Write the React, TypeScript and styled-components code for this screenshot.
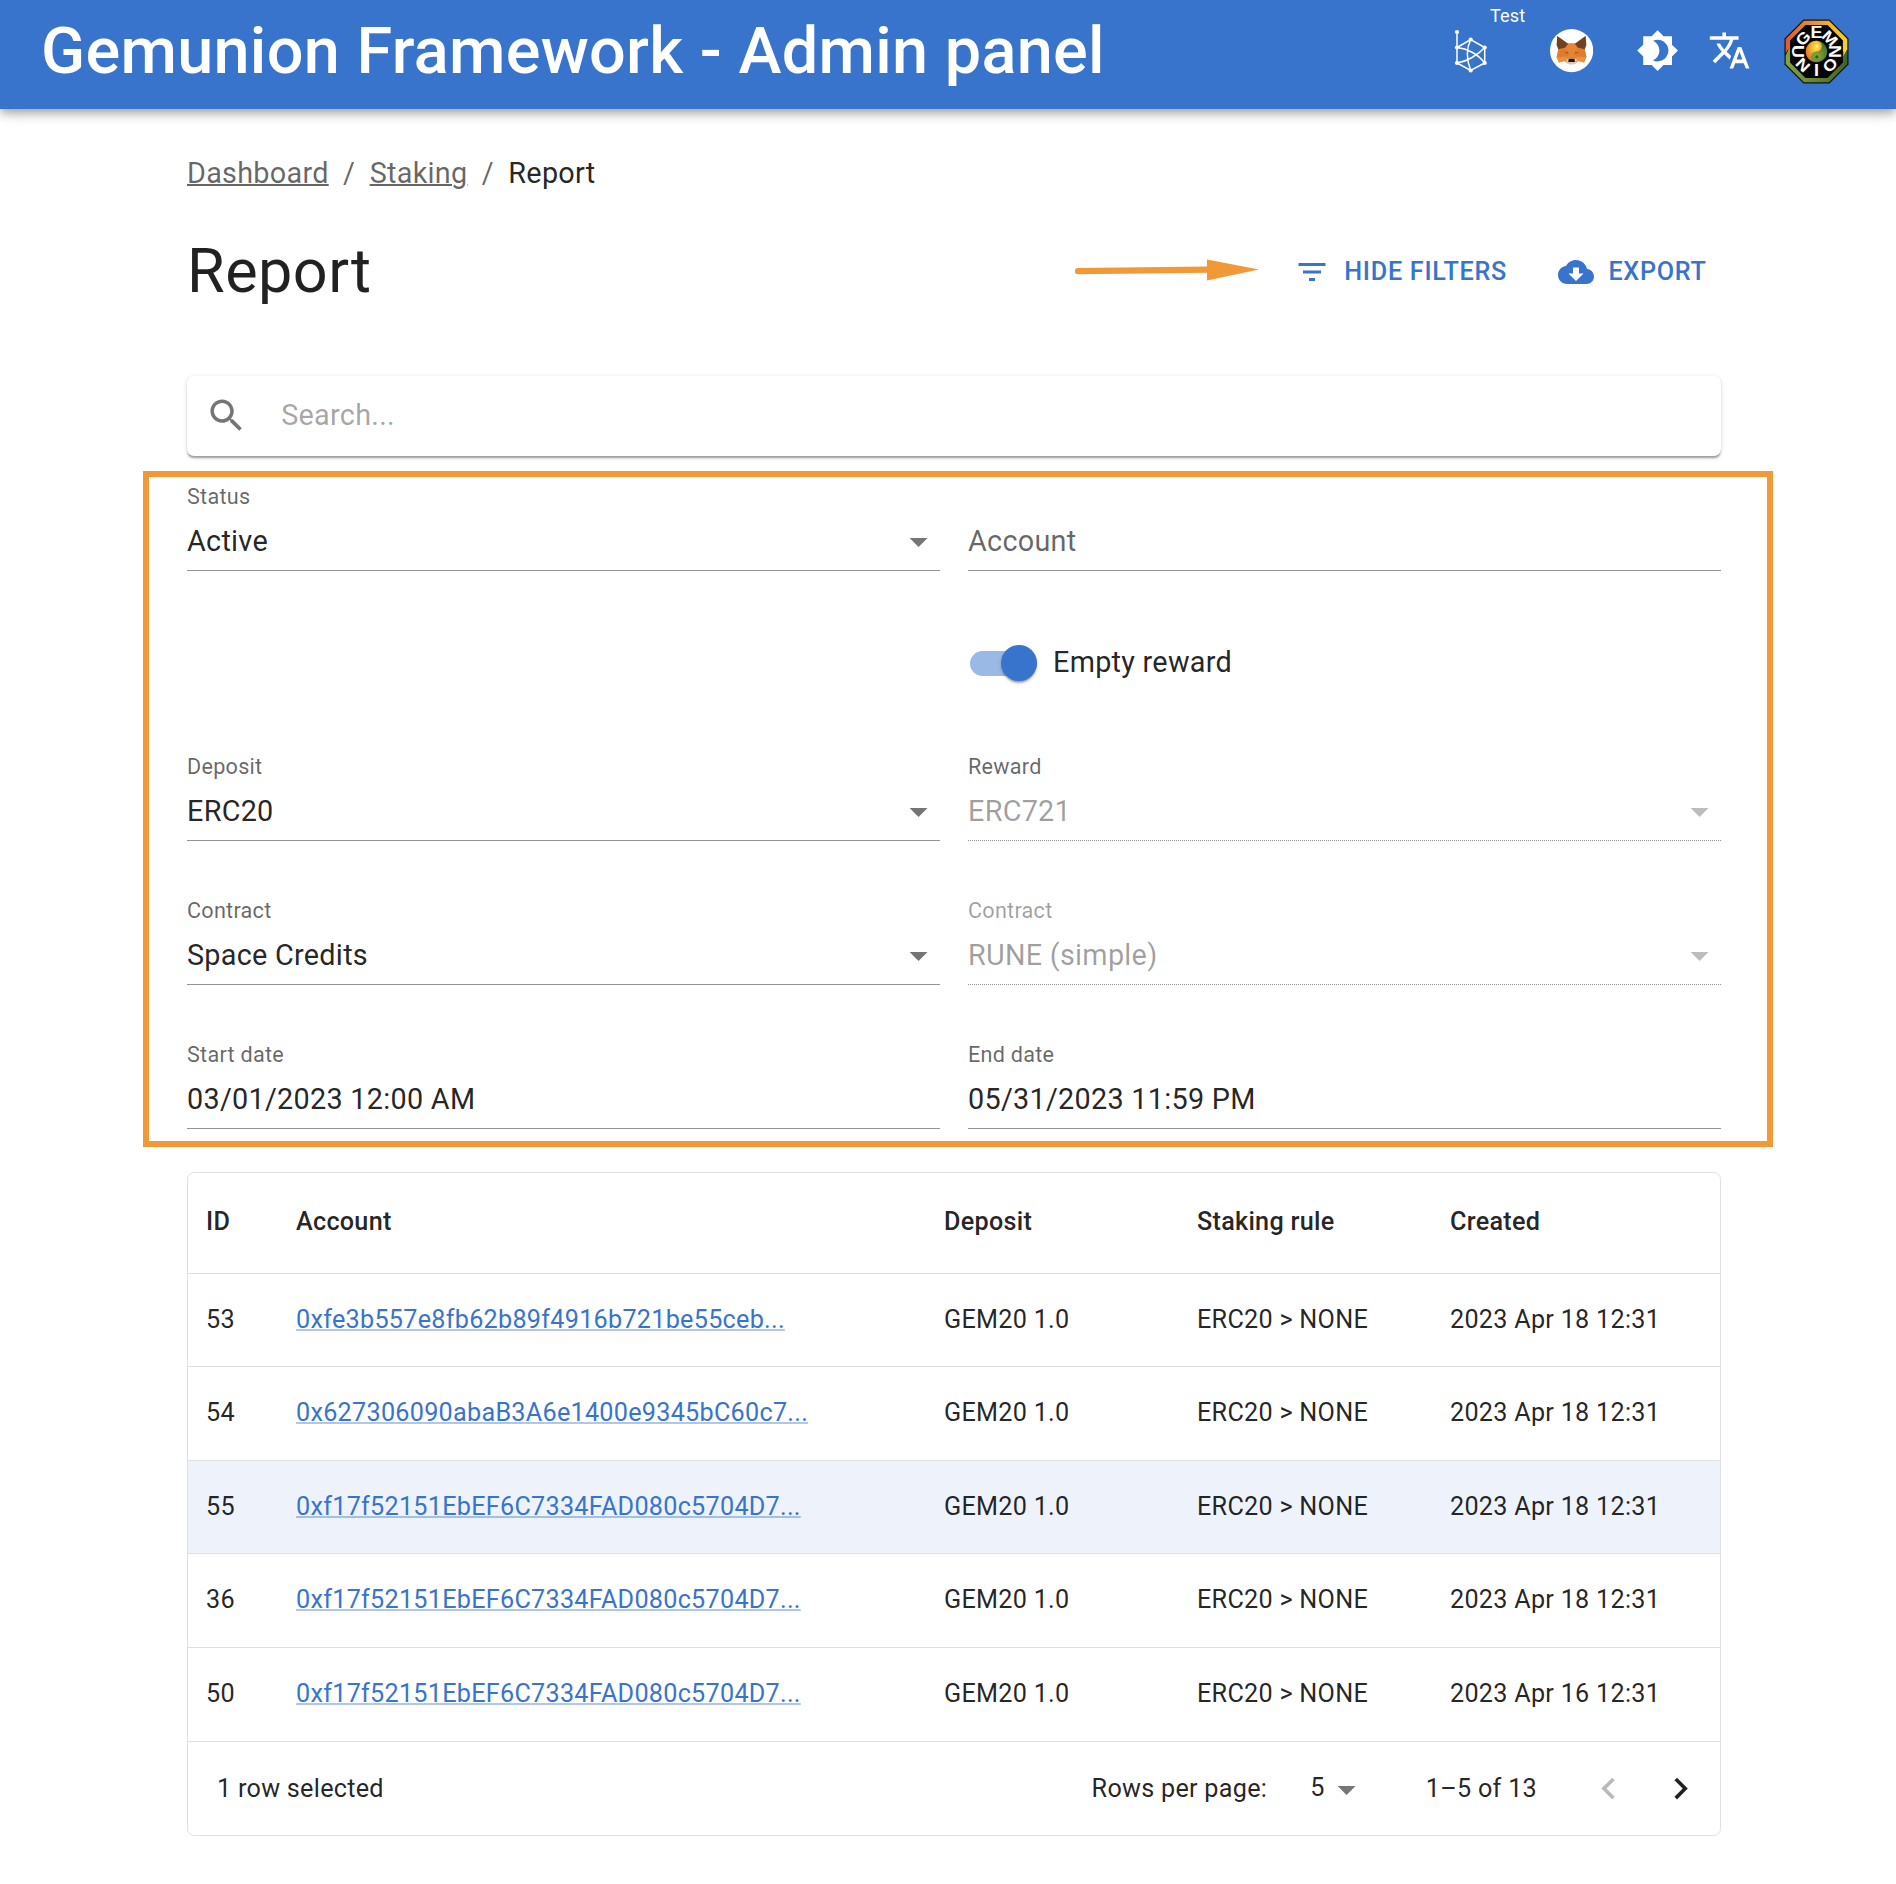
import React from "react";
import styled, { createGlobalStyle, css } from "styled-components";

const blue = "#3874cb";
const orange = "#f19937";
const ink = "rgba(0, 0, 0, 0.87)";

const GlobalStyle = createGlobalStyle`
  * { box-sizing: border-box; }
  body {
    margin: 0;
    background: #fff;
    color: ${ink};
    font-family: Roboto, "Liberation Sans", sans-serif;
    font-size: 28.8px;
    line-height: 1.5;
    letter-spacing: 0.00938em;
    -webkit-font-smoothing: antialiased;
  }
`;

const AppBar = styled.header`
  height: 109px;
  padding: 0 29px 7px 41px;
  display: flex;
  align-items: center;
  background: ${blue};
  color: #fff;
  box-shadow: 0 3.6px 7.2px -1.8px rgba(0, 0, 0, 0.2), 0 7.2px 9px rgba(0, 0, 0, 0.14),
    0 1.8px 18px rgba(0, 0, 0, 0.12);
`;

const Brand = styled.div`
  flex: 1;
  font-size: 64.8px;
  font-weight: 500;
  line-height: 72px;
  letter-spacing: 0.0045em;
  white-space: nowrap;
`;

const Toolbar = styled.div`
  display: flex;
  align-items: center;
`;

const ToolButton = styled.button<{ $width: number }>`
  position: relative;
  display: flex;
  align-items: center;
  justify-content: center;
  width: ${(p) => p.$width}px;
  height: 72px;
  padding: 0;
  border: 0;
  background: none;
  color: inherit;
  font: inherit;
`;

const Badge = styled.span`
  position: absolute;
  left: 69px;
  top: -8px;
  font-size: 18px;
  line-height: 18px;
  letter-spacing: 0.01em;
`;

const Content = styled.main`
  width: 1534px;
  margin: 0 auto 0 187px;
`;

const Breadcrumbs = styled.nav`
  display: flex;
  gap: 14.4px;
  padding-top: 42.6px;
  color: rgba(0, 0, 0, 0.6);
`;

const Crumb = styled.a`
  text-decoration: underline;
  text-decoration-thickness: 2px;
`;

const CurrentCrumb = styled.span`
  color: ${ink};
`;

const PageHeader = styled.div`
  display: flex;
  align-items: center;
  height: 76px;
  margin-top: 39px;
`;

const Heading = styled.h1`
  flex: 1;
  margin: 0;
  font-size: 61.2px;
  font-weight: 400;
  line-height: 1.235;
  letter-spacing: 0.00735em;
`;

const PointerArrow = styled.svg`
  width: 186px;
  height: 24px;
  margin: 0 34px 3px 0;
`;

const ActionButton = styled.button`
  display: flex;
  align-items: center;
  gap: 14.4px;
  padding: 0 14.4px 0 0;
  border: 0;
  background: none;
  color: ${blue};
  font-family: inherit;
  font-size: 25.2px;
  font-weight: 500;
  line-height: 44px;
  letter-spacing: 0.02857em;
  text-transform: uppercase;

  & + & {
    margin-left: 36.5px;
  }
`;

const SearchBox = styled.div`
  display: flex;
  align-items: center;
  height: 80px;
  margin-top: 66px;
  padding-left: 18px;
  gap: 33px;
  border-radius: 7.2px;
  background: #fff;
  color: rgba(0, 0, 0, 0.54);
  box-shadow: 0 3.6px 1.8px -1.8px rgba(0, 0, 0, 0.2), 0 1.8px 1.8px rgba(0, 0, 0, 0.14),
    0 1.8px 5.4px rgba(0, 0, 0, 0.12);
`;

const Placeholder = styled.span`
  color: rgba(0, 0, 0, 0.37);
`;

const FilterPanel = styled.section`
  display: grid;
  grid-template-columns: 1fr 1fr;
  grid-template-rows: 94px 126px repeat(3, 144px);
  column-gap: 28px;
  width: 1630px;
  height: 676px;
  margin: 15px 0 0 -44px;
  padding: 0 46px 0 38px;
  border: 6px solid ${orange};
`;

const Field = styled.div<{ $disabled?: boolean }>`
  display: flex;
  flex-direction: column;
  justify-content: flex-end;
  border-bottom: 1px solid #949494;
  ${(p) =>
    p.$disabled &&
    css`
      border-bottom-style: dotted;
    `}
`;

const FieldLabel = styled.label<{ $faded?: boolean }>`
  color: ${(p) => (p.$faded ? "rgba(0, 0, 0, 0.38)" : "rgba(0, 0, 0, 0.6)")};
  font-size: 21.6px;
  line-height: 31px;
`;

const FieldValue = styled.div<{ $tone?: "muted" | "disabled" }>`
  display: flex;
  align-items: center;
  justify-content: space-between;
  height: 58px;
  padding-top: 1px;
  color: ${(p) =>
    p.$tone === "disabled" ? "rgba(0, 0, 0, 0.38)" : p.$tone === "muted" ? "rgba(0, 0, 0, 0.6)" : ink};
`;

const SelectArrow = styled.svg<{ $disabled?: boolean }>`
  width: 43.2px;
  height: 43.2px;
  fill: ${(p) => (p.$disabled ? "rgba(0, 0, 0, 0.26)" : "rgba(0, 0, 0, 0.54)")};
`;

const SwitchRow = styled.label`
  grid-column: 2;
  display: flex;
  align-items: center;
  gap: 16px;
  height: 44px;
  margin-top: 70px;
  padding-left: 2px;
`;

const SwitchTrack = styled.span`
  display: flex;
  align-items: center;
  justify-content: flex-end;
  width: 67px;
  height: 25px;
  margin-top: 1px;
  border-radius: 13px;
  background: #9bb9e5;
`;

const SwitchThumb = styled.span`
  width: 36px;
  height: 36px;
  border-radius: 50%;
  background: ${blue};
  box-shadow: 0 3.6px 1.8px -1.8px rgba(0, 0, 0, 0.2), 0 1.8px 1.8px rgba(0, 0, 0, 0.14),
    0 1.8px 5.4px rgba(0, 0, 0, 0.12);
`;

const Grid = styled.div`
  margin-top: 25px;
  border: 1px solid #e0e0e0;
  border-radius: 7.2px;
  font-size: 25.2px;
  line-height: 1.43;
  letter-spacing: 0.01071em;
`;

const GridRow = styled.div<{ $head?: boolean; $selected?: boolean; $last?: boolean }>`
  display: grid;
  grid-template-columns: 90px 648px 253px 253px 1fr;
  align-items: center;
  height: ${(p) => (p.$head ? 100.8 : p.$last ? 94.6 : 93.5)}px;
  padding-bottom: ${(p) => (p.$head || p.$last ? 1 : 0)}px;
  border-bottom: 1px solid #e0e0e0;
  background: ${(p) => (p.$selected ? "#eef3fb" : "transparent")};
  font-weight: ${(p) => (p.$head ? 500 : 400)};
`;

const Cell = styled.div`
  padding-left: 18px;
  white-space: nowrap;
`;

const AccountLink = styled.a`
  color: ${blue};
  text-decoration: underline;
  text-decoration-color: rgba(56, 116, 203, 0.4);
  text-decoration-thickness: 2px;
`;

const GridFooter = styled.div`
  display: flex;
  align-items: center;
  height: 93.2px;
  padding: 0 3px 0 29px;
`;

const SelectedCount = styled.span`
  flex: 1;
`;

const PageSize = styled.span`
  display: flex;
  align-items: center;
  margin: -2px 58px 0 43px;
`;

const PageSizeArrow = styled(SelectArrow)`
  margin-top: 3px;
`;

const PageNav = styled.button<{ $disabled?: boolean }>`
  display: flex;
  width: 72px;
  height: 72px;
  padding: 0;
  border: 0;
  align-items: center;
  justify-content: center;
  background: none;
  color: ${(p) => (p.$disabled ? "rgba(0, 0, 0, 0.27)" : ink)};
`;

const PageButtons = styled.div`
  display: flex;
  margin-left: 36px;
`;

const paths = {
  theme:
    "M20 8.69V4h-4.69L12 .69 8.69 4H4v4.69L.69 12 4 15.31V20h4.69L12 23.31 15.31 20H20v-4.69L23.31 12 20 8.69zM12 18c-.89 0-1.74-.2-2.5-.55C11.56 16.5 13 14.42 13 12s-1.44-4.5-3.5-5.45C10.26 6.2 11.11 6 12 6c3.31 0 6 2.69 6 6s-2.69 6-6 6z",
  translate:
    "M12.87 15.07l-2.54-2.51.03-.03c1.74-1.94 2.98-4.17 3.71-6.53H17V4h-7V2H8v2H1v1.99h11.17C11.5 7.92 10.44 9.75 9 11.35 8.07 10.32 7.3 9.19 6.69 8h-2c.73 1.63 1.73 3.17 2.98 4.56l-5.09 5.02L4 19l5-5 3.11 3.11.76-2.04zM18.5 10h-2L12 22h2l1.12-3h4.75L21 22h2l-4.5-12zm-2.62 7l1.62-4.33L19.12 17h-3.24z",
  filter: "M10 18h4v-2h-4v2zM3 6v2h18V6H3zm3 7h12v-2H6v2z",
  cloud:
    "M19.35 10.04C18.67 6.59 15.64 4 12 4 9.11 4 6.6 5.64 5.35 8.04 2.34 8.36 0 10.91 0 14c0 3.31 2.69 6 6 6h13c2.76 0 5-2.24 5-5 0-2.64-2.05-4.78-4.65-4.96zM17 13l-5 5-5-5h3V9h4v4h3z",
  search:
    "M15.5 14h-.79l-.28-.27C15.41 12.59 16 11.11 16 9.5 16 5.91 13.09 3 9.5 3S3 5.91 3 9.5 5.91 16 9.5 16c1.61 0 3.09-.59 4.23-1.57l.27.28v.79l5 4.99L20.49 19l-4.99-5zm-6 0C7.01 14 5 11.99 5 9.5S7.01 5 9.5 5 14 7.01 14 9.5 11.99 14 9.5 14z",
  prev: "M15.41 16.59L10.83 12l4.58-4.59L14 6l-6 6 6 6z",
  next: "M8.59 16.59L13.17 12 8.59 7.41 10 6l6 6-6 6z",
};

const Icon = ({ name, size = 43.2 }: { name: keyof typeof paths; size?: number }) => (
  <svg width={size} height={size} viewBox="0 0 24 24" fill="currentColor">
    <path d={paths[name]} />
  </svg>
);

const Caret = () => <path d="M7 10l5 5 5-5z" />;

const NetworkIcon = () => (
  <svg width="36" height="46" viewBox="0 0 36 46" fill="none" stroke="#fff" strokeWidth="1.5">
    <path d="M4 4V35L17.7 42.5L31.7 35V19.5L17.7 11.5L4 19.5" />
    <path d="M4 19.5C14 20.5 25 26 31.7 35M31.7 19.5C25 27 14 33.5 4 35M17.7 11.5C13 21 14 33 17.7 42.5" />
    {[
      [4, 4],
      [4, 19.5],
      [4, 35],
      [17.7, 11.5],
      [31.7, 19.5],
      [31.7, 35],
      [17.7, 42.5],
    ].map(([x, y]) => (
      <circle key={`${x}-${y}`} cx={x} cy={y} r="2.1" fill="#fff" stroke="none" />
    ))}
  </svg>
);

const FoxIcon = () => (
  <svg width="43.2" height="43.2" viewBox="0 0 43.2 43.2">
    <circle cx="21.6" cy="21.6" r="21.6" fill="#fff" />
    <path d="M7.2 7L17 14.2H26L35.6 7L35 22L36.5 28L34 33.5L28.5 32L24.5 35H18.5L14.5 32L9 33.5L6.5 28L8.2 22Z" fill="#e58435" />
    <path d="M7.2 7L18.2 14.8L15 18.8L8.3 20.2L6.6 16Z" fill="#704224" />
    <path d="M35.6 7L24.8 14.8L28 18.8L34.7 20.2L36.4 16Z" fill="#704224" />
    <path d="M8 21.5L15.5 19.5L17.5 27L7 28.5ZM35.2 21.5L27.7 19.5L25.7 27L36.2 28.5Z" fill="#e07b2e" />
    <path d="M14.5 23.5L18 22.5L18.5 25.3ZM28.7 23.5L25.2 22.5L24.7 25.3Z" fill="#a65a2b" />
    <path d="M6.8 28H16L17.8 31L14.5 32L9 33.5ZM36.4 28H27.2L25.4 31L28.5 32L34 33.5Z" fill="#ef8f3b" />
    <path d="M16 30.5L18.5 29.5H24.7L27.2 30.5L25.6 34.5L23.5 35.5H19.5L17.5 34.5Z" fill="#d8c8b8" />
    <path d="M18.8 29.8H24.4L25 33H18.2Z" fill="#211b18" />
  </svg>
);

const sealLetters: [string, number, number][] = [
  ["G", -45, -45],
  ["E", 0, 0],
  ["M", 45, 45],
  ["N", 90, -90],
  ["O", 135, -45],
  ["I", 180, 0],
  ["N", 225, 45],
  ["U", 270, 90],
];

const SealLogo = () => (
  <svg width="65" height="65" viewBox="-32.5 -32.5 65 65">
    <defs>
      <linearGradient id="sealTop">
        <stop offset="0" stopColor="#df5b2b" />
        <stop offset="1" stopColor="#f6d32c" />
      </linearGradient>
      <linearGradient id="sealBottom">
        <stop offset="0" stopColor="#86a23b" />
        <stop offset="1" stopColor="#3f6529" />
      </linearGradient>
      <radialGradient id="sunGlow" cx="0.65" cy="0.3" r="0.75">
        <stop offset="0" stopColor="#ffe83c" />
        <stop offset="1" stopColor="#dc6c25" />
      </radialGradient>
      <radialGradient id="leafGlow" cx="0.5" cy="0.7" r="0.7">
        <stop offset="0" stopColor="#8aa83c" />
        <stop offset="1" stopColor="#3c6b2b" />
      </radialGradient>
    </defs>
    <path d="M-13 -32H13L32 -13V13L13 32H-13L-32 13V-13Z" fill="#111" />
    <path d="M-12.5 -30.8H12.5L30.8 -12.5V-2L28 3V6H-28V-3L-30.8 2V-12.5Z" fill="url(#sealTop)" />
    <path d="M-30.8 12.5V4L-27 -4V0H27V5L30.8 -2V12.5L12.5 30.8H-12.5Z" fill="url(#sealBottom)" />
    <path d="M-11 -26.4H11L26.4 -11V11L11 26.4H-11L-26.4 11V-11Z" fill="#050505" />
    {sealLetters.map(([letter, angle, turn]) => {
      const a = (angle * Math.PI) / 180;
      const x = Math.sin(a) * 19;
      const y = -Math.cos(a) * 19;
      return (
        <text
          key={angle}
          transform={`translate(${x} ${y}) rotate(${turn}) scale(1.15 1)`}
          y="5.6"
          textAnchor="middle"
          fontFamily="Liberation Sans, sans-serif"
          fontWeight="700"
          fontSize="15.6"
          letterSpacing="0"
          fill="#fff"
        >
          {letter}
        </text>
      );
    })}
    <circle r="11.4" fill="#050505" />
    <circle r="10.7" fill="url(#leafGlow)" />
    <path d="M0 -10.7A5.35 5.35 0 0 1 0 0A5.35 5.35 0 0 0 0 10.7A10.7 10.7 0 0 1 0 -10.7Z" fill="url(#sunGlow)" />
    <circle cx="0.5" cy="-5.4" r="1.5" fill="#fff49c" />
    <circle cx="0.3" cy="5.4" r="1.6" fill="#35591f" />
  </svg>
);

type FormFieldProps = {
  label?: string;
  value: string;
  select?: boolean;
  disabled?: boolean;
  fadedLabel?: boolean;
  tone?: "muted" | "disabled";
};

const FormField = ({ label, value, select, disabled, fadedLabel, tone }: FormFieldProps) => (
  <Field $disabled={disabled}>
    {label && <FieldLabel $faded={fadedLabel}>{label}</FieldLabel>}
    <FieldValue $tone={disabled ? "disabled" : tone}>
      {value}
      {select && (
        <SelectArrow $disabled={disabled} viewBox="0 0 24 24">
          <Caret />
        </SelectArrow>
      )}
    </FieldValue>
  </Field>
);

const columns = ["ID", "Account", "Deposit", "Staking rule", "Created"];

const rows = [
  { id: 53, account: "0xfe3b557e8fb62b89f4916b721be55ceb...", created: "2023 Apr 18 12:31" },
  { id: 54, account: "0x627306090abaB3A6e1400e9345bC60c7...", created: "2023 Apr 18 12:31" },
  { id: 55, account: "0xf17f52151EbEF6C7334FAD080c5704D7...", created: "2023 Apr 18 12:31" },
  { id: 36, account: "0xf17f52151EbEF6C7334FAD080c5704D7...", created: "2023 Apr 18 12:31" },
  { id: 50, account: "0xf17f52151EbEF6C7334FAD080c5704D7...", created: "2023 Apr 16 12:31" },
];

export default function App() {
  return (
    <>
      <GlobalStyle />
      <AppBar>
        <Brand>Gemunion Framework - Admin panel</Brand>
        <Toolbar>
          <ToolButton $width={100}>
            <NetworkIcon />
            <Badge>Test</Badge>
          </ToolButton>
          <ToolButton $width={101}>
            <FoxIcon />
          </ToolButton>
          <ToolButton $width={72}>
            <Icon name="theme" />
          </ToolButton>
          <ToolButton $width={72}>
            <Icon name="translate" />
          </ToolButton>
          <ToolButton $width={101}>
            <SealLogo />
          </ToolButton>
        </Toolbar>
      </AppBar>
      <Content>
        <Breadcrumbs>
          <Crumb>Dashboard</Crumb>
          <span>/</span>
          <Crumb>Staking</Crumb>
          <span>/</span>
          <CurrentCrumb>Report</CurrentCrumb>
        </Breadcrumbs>
        <PageHeader>
          <Heading>Report</Heading>
          <PointerArrow viewBox="0 0 186 24">
            <path d="M4 13.2L134 11.6" stroke={orange} strokeWidth="6.2" strokeLinecap="round" />
            <path d="M133 1.5L185 11.5L133 22.5Z" fill={orange} />
          </PointerArrow>
          <ActionButton>
            <Icon name="filter" size={36} />
            Hide filters
          </ActionButton>
          <ActionButton>
            <Icon name="cloud" size={36} />
            Export
          </ActionButton>
        </PageHeader>
        <SearchBox>
          <Icon name="search" />
          <Placeholder>Search...</Placeholder>
        </SearchBox>
        <FilterPanel>
          <FormField label="Status" value="Active" select />
          <FormField value="Account" tone="muted" />
          <SwitchRow>
            <SwitchTrack>
              <SwitchThumb />
            </SwitchTrack>
            Empty reward
          </SwitchRow>
          <FormField label="Deposit" value="ERC20" select />
          <FormField label="Reward" value="ERC721" select disabled />
          <FormField label="Contract" value="Space Credits" select />
          <FormField label="Contract" value="RUNE (simple)" select disabled fadedLabel />
          <FormField label="Start date" value="03/01/2023 12:00 AM" />
          <FormField label="End date" value="05/31/2023 11:59 PM" />
        </FilterPanel>
        <Grid>
          <GridRow $head>
            {columns.map((name) => (
              <Cell key={name}>{name}</Cell>
            ))}
          </GridRow>
          {rows.map((row, index) => (
            <GridRow key={row.id} $selected={row.id === 55} $last={index === rows.length - 1}>
              <Cell>{row.id}</Cell>
              <Cell>
                <AccountLink>{row.account}</AccountLink>
              </Cell>
              <Cell>GEM20 1.0</Cell>
              <Cell>ERC20 &gt; NONE</Cell>
              <Cell>{row.created}</Cell>
            </GridRow>
          ))}
          <GridFooter>
            <SelectedCount>1 row selected</SelectedCount>
            <span>Rows per page:</span>
            <PageSize>
              5
              <PageSizeArrow viewBox="0 0 24 24">
                <Caret />
              </PageSizeArrow>
            </PageSize>
            <span>1–5 of 13</span>
            <PageButtons>
              <PageNav $disabled>
                <Icon name="prev" />
              </PageNav>
              <PageNav>
                <Icon name="next" />
              </PageNav>
            </PageButtons>
          </GridFooter>
        </Grid>
      </Content>
    </>
  );
}
